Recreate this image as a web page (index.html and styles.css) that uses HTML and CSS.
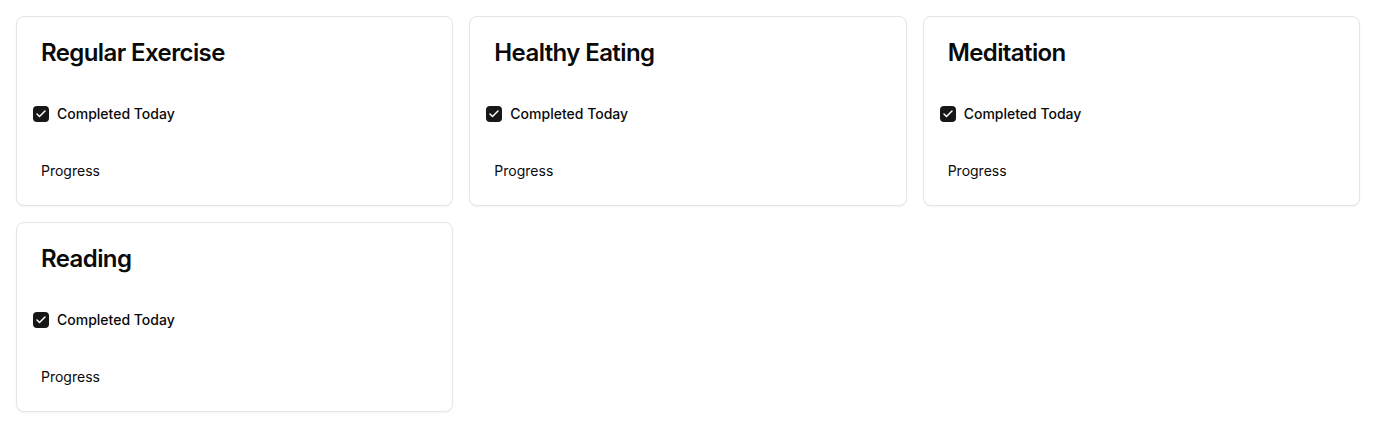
FILE: index.html
```html
<!DOCTYPE html>
<html lang="en">
<head>
<meta charset="utf-8">
<link rel="stylesheet" href="styles.css">
</head>
<body>
<div class="grid">
  <div class="card">
    <div class="card-header"><h3 class="card-title">Regular Exercise</h3></div>
    <div class="card-content">
      <label class="check-row"><span class="checkbox"><svg viewBox="0 0 24 24" width="12" height="12"><path d="M20 6 9 17l-5-5" fill="none" stroke="#fff" stroke-width="3" stroke-linecap="round" stroke-linejoin="round"/></svg></span><span class="check-label">Completed Today</span></label>
      <div class="progress">Progress</div>
    </div>
  </div>
  <div class="card">
    <div class="card-header"><h3 class="card-title">Healthy Eating</h3></div>
    <div class="card-content">
      <label class="check-row"><span class="checkbox"><svg viewBox="0 0 24 24" width="12" height="12"><path d="M20 6 9 17l-5-5" fill="none" stroke="#fff" stroke-width="3" stroke-linecap="round" stroke-linejoin="round"/></svg></span><span class="check-label">Completed Today</span></label>
      <div class="progress">Progress</div>
    </div>
  </div>
  <div class="card">
    <div class="card-header"><h3 class="card-title">Meditation</h3></div>
    <div class="card-content">
      <label class="check-row"><span class="checkbox"><svg viewBox="0 0 24 24" width="12" height="12"><path d="M20 6 9 17l-5-5" fill="none" stroke="#fff" stroke-width="3" stroke-linecap="round" stroke-linejoin="round"/></svg></span><span class="check-label">Completed Today</span></label>
      <div class="progress">Progress</div>
    </div>
  </div>
  <div class="card">
    <div class="card-header"><h3 class="card-title">Reading</h3></div>
    <div class="card-content">
      <label class="check-row"><span class="checkbox"><svg viewBox="0 0 24 24" width="12" height="12"><path d="M20 6 9 17l-5-5" fill="none" stroke="#fff" stroke-width="3" stroke-linecap="round" stroke-linejoin="round"/></svg></span><span class="check-label">Completed Today</span></label>
      <div class="progress">Progress</div>
    </div>
  </div>
</div>
</body>
</html>
```
FILE: styles.css
```css
* { box-sizing: border-box; }
html, body { margin: 0; padding: 0; background: #fff; }
body {
  font-family: Inter, "Noto Sans", sans-serif;
  color: #0a0a0a;
  padding: 16px;
}
.grid {
  display: grid;
  grid-template-columns: repeat(3, 1fr);
  gap: 16px;
}
.card {
  border: 1px solid #e5e5e5;
  border-radius: 8px;
  background: #fff;
  box-shadow: 0 1px 2px rgba(0,0,0,0.05);
  height: 190px;
}
.card-header { padding: 24px; }
.card-title {
  margin: 0;
  font-size: 24px;
  line-height: 24px;
  font-weight: 600;
  letter-spacing: -0.6px;
}
.card-content { padding: 15px 16px 0; }
.check-row {
  display: flex;
  align-items: center;
  gap: 8px;
  height: 20px;
}
.checkbox {
  width: 16px;
  height: 16px;
  border-radius: 4px;
  background: #171717;
  display: flex;
  align-items: center;
  justify-content: center;
  flex-shrink: 0;
}
.check-label {
  font-size: 14px;
  line-height: 20px;
  font-weight: 500;
}
.progress {
  margin-top: 37px;
  padding-left: 8px;
  font-size: 14px;
  line-height: 20px;
}
```
